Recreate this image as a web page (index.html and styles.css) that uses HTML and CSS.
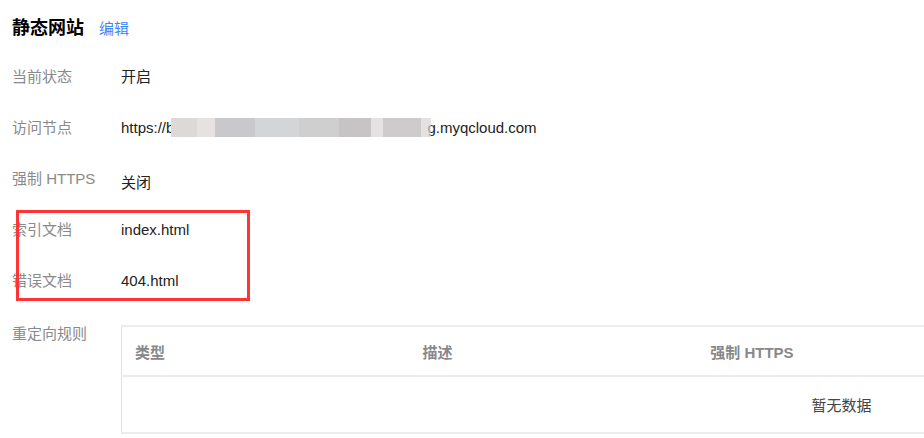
FILE: index.html
```html
<!DOCTYPE html>
<html lang="zh-CN">
<head>
    <meta charset="UTF-8">
    <meta name="viewport" content="width=device-width, initial-scale=1.0">
    <title>静态网站</title>
    <link rel="stylesheet" href="styles.css">
</head>
<body>
    <div class="page">
        <div class="header">
            <h2 class="title">静态网站</h2>
            <a class="edit" href="#">编辑</a>
        </div>

        <div class="row">
            <div class="label">当前状态</div>
            <div class="value">开启</div>
        </div>
        <div class="row">
            <div class="label">访问节点</div>
            <div class="value">https://b<span class="masked"></span>g.myqcloud.com</div>
        </div>
        <div class="row">
            <div class="label">强制 HTTPS</div>
            <div class="value value-low">关闭</div>
        </div>
        <div class="row">
            <div class="label">索引文档</div>
            <div class="value">index.html</div>
        </div>
        <div class="row">
            <div class="label">错误文档</div>
            <div class="value">404.html</div>
        </div>

        <div class="row row-top">
            <div class="label">重定向规则</div>
            <table class="rules">
                <colgroup>
                    <col><col><col><col><col>
                </colgroup>
                <thead>
                    <tr>
                        <th>类型</th>
                        <th>描述</th>
                        <th>强制 HTTPS</th>
                        <th></th>
                        <th></th>
                    </tr>
                </thead>
                <tbody>
                    <tr>
                        <td class="empty" colspan="5">暂无数据</td>
                    </tr>
                </tbody>
            </table>
        </div>

        <!-- 标注框 -->
        <div class="highlight"></div>
    </div>
</body>
</html>
```

FILE: styles.css
```css
body {
    margin: 0;
    font-family: 'Liberation Sans', 'Noto Sans CJK SC', sans-serif;
    font-size: 15px;
    color: #222;
    background: #fff;
    overflow: hidden;
}

.page {
    position: relative;
    padding-left: 12px;
}

.header {
    display: flex;
    align-items: baseline;
    gap: 15px;
    box-sizing: border-box;
    height: 51px;
    padding-top: 16px;
}

.title {
    margin: 0;
    font-size: 18px;
    font-weight: bold;
    color: #000;
    line-height: 24px;
}

.edit {
    color: #3a87f5;
    text-decoration: none;
    font-size: 15px;
}

.row {
    display: flex;
    align-items: center;
    height: 51px;
}

.label {
    width: 109px;
    flex-shrink: 0;
    color: #8a8a8a;
    line-height: 20px;
}

.value {
    line-height: 20px;
    white-space: nowrap;
}

.value-low {
    padding-top: 9px;
}

.masked {
    position: relative;
    display: inline-block;
    vertical-align: -4px;
    width: 260px;
    height: 19px;
    margin: 0 -4px 0 -3px;
    background: linear-gradient(90deg,
        #dcd9d9 0, #dcd9d9 26px,
        #e6e2e2 26px, #e6e2e2 44px,
        #c9c8ca 44px, #c9c8ca 84px,
        #d3d5d6 84px, #d3d5d6 128px,
        #cfcfcf 128px, #cfcfcf 168px,
        #c6c4c4 168px, #c6c4c4 200px,
        #e4e2e2 200px, #e4e2e2 212px,
        #cdcbcc 212px, #cdcbcc 250px,
        rgba(215, 212, 213, 0.7) 250px, rgba(215, 212, 213, 0.7) 260px);
    filter: blur(0.6px);
}

.row-top {
    align-items: flex-start;
    height: auto;
    margin-top: 18px;
}

.rules {
    flex-shrink: 0;
    width: 1440px;
    margin-top: 1px;
    border-collapse: collapse;
    table-layout: fixed;
    border-left: 1px solid #e2e2e2;
    border-top: 2px solid #ececec;
}

.rules col {
    width: 287px;
}

.rules th {
    height: 48px;
    padding: 0 13px;
    text-align: left;
    font-weight: bold;
    color: #888;
    font-size: 15px;
    border-bottom: 2px solid #ececec;
}

.rules td {
    height: 55px;
    padding: 0;
    border-bottom: 2px solid #ececec;
}

.empty {
    text-align: center;
    color: #444;
}

.highlight {
    position: absolute;
    left: 16px;
    top: 210px;
    width: 228px;
    height: 85px;
    border: 3px solid #ff3535;
}
```
